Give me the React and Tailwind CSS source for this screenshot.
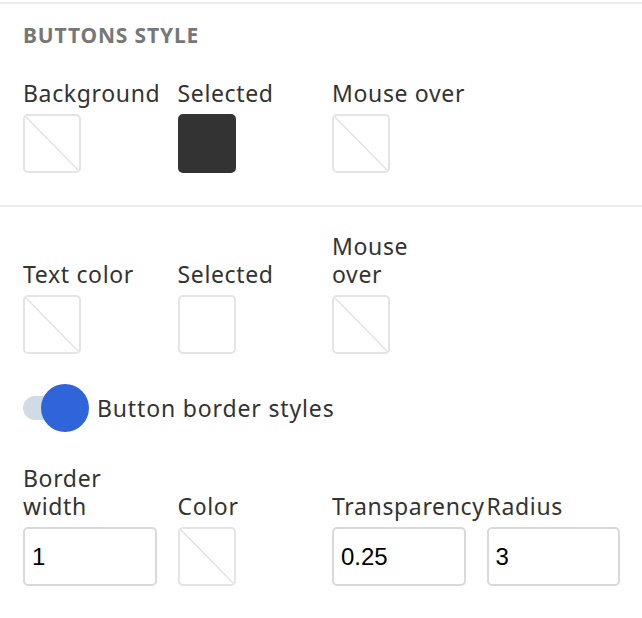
import React from "react";

function Swatch({ filled = false, diagonal = true }) {
  if (filled) {
    return <div className="w-[58px] h-[59px] rounded-[5px] bg-[#333333]" />;
  }
  return (
    <div className="relative w-[58px] h-[59px] rounded-[5px] border-2 border-[#e4e4e4] bg-white overflow-hidden">
      {diagonal && (
        <svg className="absolute inset-0 w-full h-full" viewBox="0 0 54 55" preserveAspectRatio="none">
          <line x1="0" y1="0" x2="54" y2="55" stroke="#e2e2e2" strokeWidth="1.5" />
        </svg>
      )}
    </div>
  );
}

function Cell({ label, children, nowrap = false }) {
  return (
    <div className="flex flex-col">
      <div className="flex-1 flex flex-col justify-end">
        <div className={"text-[23px] leading-[28px] tracking-[0.65px] text-[#333333]" + (nowrap ? " whitespace-nowrap" : "")}>{label}</div>
      </div>
      <div className="mt-[7px]">{children}</div>
    </div>
  );
}

function NumInput({ value }) {
  return (
    <input
      readOnly
      value={value}
      className="w-full h-[59px] rounded-[5px] border-2 border-[#d9d9d9] bg-white px-[7px] text-[24px] text-black outline-none"
      style={{ fontFamily: '"Liberation Sans", Arial, sans-serif' }}
    />
  );
}

export default function App() {
  return (
    <div className="w-[642px] h-[618px] bg-white pt-[2px]" style={{ fontFamily: '"Noto Sans", "Open Sans", sans-serif' }}>
      <div className="border-t-2 border-[#ededed] pl-[23px] pr-[22px] pt-[19px] pb-[32px]">
        <div className="text-[21px] leading-[24px] font-bold text-[#777777] tracking-[0.85px]">BUTTONS STYLE</div>
        <div className="grid grid-cols-4 gap-x-[21px] mt-[32px]">
          <Cell label="Background" nowrap><Swatch /></Cell>
          <Cell label="Selected" nowrap><Swatch filled /></Cell>
          <Cell label="Mouse over" nowrap><Swatch /></Cell>
        </div>
      </div>
      <div className="border-t-2 border-[#ededed] pl-[23px] pr-[22px] pt-[25px]">
        <div className="grid grid-cols-4 gap-x-[21px]">
          <Cell label="Text color"><Swatch /></Cell>
          <Cell label="Selected"><Swatch diagonal={false} /></Cell>
          <Cell label={<span className="block w-[100px]">Mouse over</span>}><Swatch /></Cell>
        </div>
        <div className="flex items-center mt-[30px] h-[48px]">
          <div className="relative w-[60px] h-[24px] shrink-0">
            <div className="absolute left-0 top-0 w-[56px] h-[24px] rounded-full bg-[#cfdce6]" />
            <div className="absolute left-[18px] top-[-12px] w-[48px] h-[48px] rounded-full bg-[#3064d9]" />
          </div>
          <div className="ml-[14px] text-[23px] leading-[28px] tracking-[0.85px] text-[#333333]">Button border styles</div>
        </div>
        <div className="grid grid-cols-4 gap-x-[21px] mt-[32px]">
          <Cell label={<span className="block w-[100px]">Border width</span>}><NumInput value="1" /></Cell>
          <Cell label="Color"><Swatch /></Cell>
          <Cell label="Transparency" nowrap><NumInput value="0.25" /></Cell>
          <Cell label="Radius"><NumInput value="3" /></Cell>
        </div>
      </div>
    </div>
  );
}
